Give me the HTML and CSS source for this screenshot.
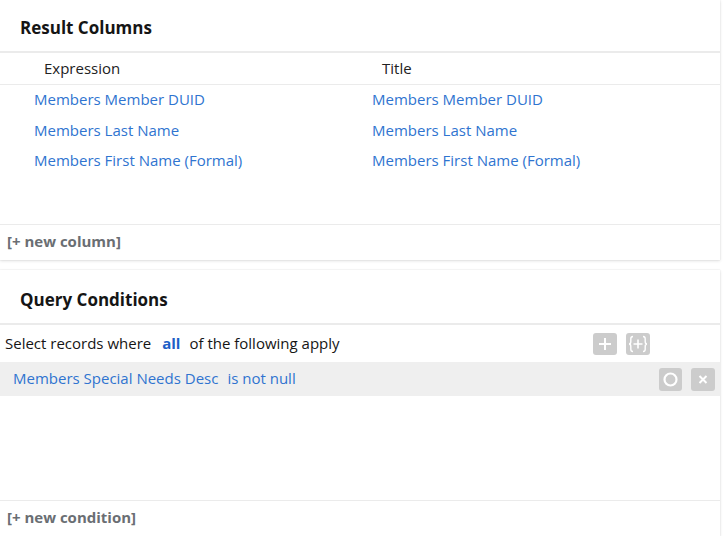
FILE: index.html
```html
<!DOCTYPE html>
<html>
<head>
<meta charset="utf-8">
<link rel="stylesheet" href="styles.css">
</head>
<body>
<div class="page">
  <section class="card card-columns">
    <header class="card-head"><h2>Result Columns</h2></header>
    <div class="grid-head">
      <div class="th th-expr">Expression</div>
      <div class="th th-title">Title</div>
    </div>
    <div class="grid-body">
      <div class="row"><a class="cell c1">Members Member DUID</a><a class="cell c2">Members Member DUID</a></div>
      <div class="row"><a class="cell c1">Members Last Name</a><a class="cell c2">Members Last Name</a></div>
      <div class="row"><a class="cell c1">Members First Name (Formal)</a><a class="cell c2">Members First Name (Formal)</a></div>
    </div>
    <footer class="card-foot"><a class="add">[+ new column]</a></footer>
  </section>

  <section class="card card-conds">
    <header class="card-head"><h2>Query Conditions</h2></header>
    <div class="cond-top">
      <span class="txt">Select records where</span>
      <a class="all">all</a>
      <span class="txt">of the following apply</span>
      <span class="spacer"></span>
      <span class="btns">
        <button class="ibtn" title="add"><svg width="24" height="22" viewBox="0 0 24 22"><path d="M12 5v12M6 11h12" stroke="#fff" stroke-width="2" fill="none"/></svg></button>
        <button class="ibtn" title="group"><svg width="24" height="22" viewBox="0 0 24 22"><path d="M7 3.5c-1.7 0-2.2.6-2.2 2.2v2.8c0 1.3-.6 2.5-1.8 2.5 1.2 0 1.8 1.2 1.8 2.5v2.8c0 1.6.5 2.2 2.2 2.2M17 3.5c1.7 0 2.2.6 2.2 2.2v2.8c0 1.3.6 2.5 1.8 2.5-1.2 0-1.8 1.2-1.8 2.5v2.8c0 1.6-.5 2.2-2.2 2.2" stroke="#fff" stroke-width="1.4" fill="none"/><path d="M12 6.5v9M7.5 11h9" stroke="#fff" stroke-width="1.6" fill="none"/></svg></button>
      </span>
    </div>
    <div class="cond-row">
      <a class="field">Members Special Needs Desc</a>
      <a class="op">is not null</a>
      <span class="spacer"></span>
      <span class="btns">
        <button class="ibtn" title="toggle"><svg width="23" height="23" viewBox="0 0 23 23"><circle cx="11.5" cy="11.5" r="6" stroke="#fff" stroke-width="2.2" fill="none"/></svg></button>
        <button class="ibtn" title="remove"><svg width="24" height="23" viewBox="0 0 24 23"><path d="M8.5 8l7 7M15.5 8l-7 7" stroke="#fff" stroke-width="2" fill="none"/></svg></button>
      </span>
    </div>
    <div class="cond-space"></div>
    <footer class="card-foot"><a class="add">[+ new condition]</a></footer>
  </section>
</div>
</body>
</html>
```

FILE: styles.css
```css
* { box-sizing: border-box; }
html, body { margin: 0; padding: 0; background: #fff; }
body {
  font-family: "Open Sans", "Noto Sans", sans-serif;
  font-size: 15px;
  color: #151515;
}
.page {
  width: 720px;
  display: flex;
  flex-direction: column;
  gap: 10px;
}
.card {
  background: #fff;
  box-shadow: 0 1px 3px rgba(0,0,0,0.12), 0 0 1px rgba(0,0,0,0.14);
  display: flex;
  flex-direction: column;
}
.card-columns { height: 260px; }
.card-conds { height: 266px; }
.card-head {
  height: 53px;
  border-bottom: 2px solid #ebebeb;
  display: flex;
  align-items: center;
  padding-left: 20px;
  padding-top: 4px;
}
.card-head h2 {
  margin: 0;
  font-size: 17px;
  font-weight: 700;
  color: #151515;
}
.card-conds .card-head { height: 55px; padding-top: 6px; }
.grid-head {
  display: grid;
  grid-template-columns: 338px 1fr;
  height: 32px;
  border-bottom: 1px solid #ebebeb;
  align-items: center;
  padding-bottom: 2px;
}
.th { padding-left: 44px; color: #222; }
.grid-body { flex: 1; }
.row {
  display: grid;
  grid-template-columns: 338px 1fr;
  height: 30.5px;
  align-items: center;
  padding-bottom: 2px;
}
.cell { padding-left: 34px; }
a { color: #2f74d0; text-decoration: none; }
.card-foot {
  height: 36px;
  border-top: 1px solid #ebebeb;
  display: flex;
  align-items: center;
  padding-left: 7px;
  padding-bottom: 3px;
}
.add { color: #6a6e73; font-weight: 700; }
.cond-top {
  height: 37px;
  display: flex;
  align-items: center;
  padding-left: 5px;
}
.cond-top .txt, .cond-top .all { padding-bottom: 2px; }
.all { color: #1c5fc7; font-weight: 700; margin: 0 9px 0 11px; }
.spacer { flex: 1; }
.btns { display: flex; gap: 9px; }
.cond-top .btns { margin-right: 70px; }
.ibtn {
  border: 0;
  padding: 0;
  margin: 0;
  background: #cccccc;
  border-radius: 3px;
  width: 24px;
  height: 22px;
  display: flex;
  align-items: center;
  justify-content: center;
}
.cond-row {
  height: 34px;
  background: #efefef;
  display: flex;
  align-items: center;
  padding-left: 13px;
}
.cond-row .field, .cond-row .op { padding-bottom: 2px; }
.cond-row .op { margin-left: 9px; }
.cond-row .btns { margin-right: 5px; }
.cond-row .ibtn { height: 23px; width: 23px; }
.cond-row .ibtn + .ibtn { width: 24px; }
.cond-space { flex: 1; }
```
